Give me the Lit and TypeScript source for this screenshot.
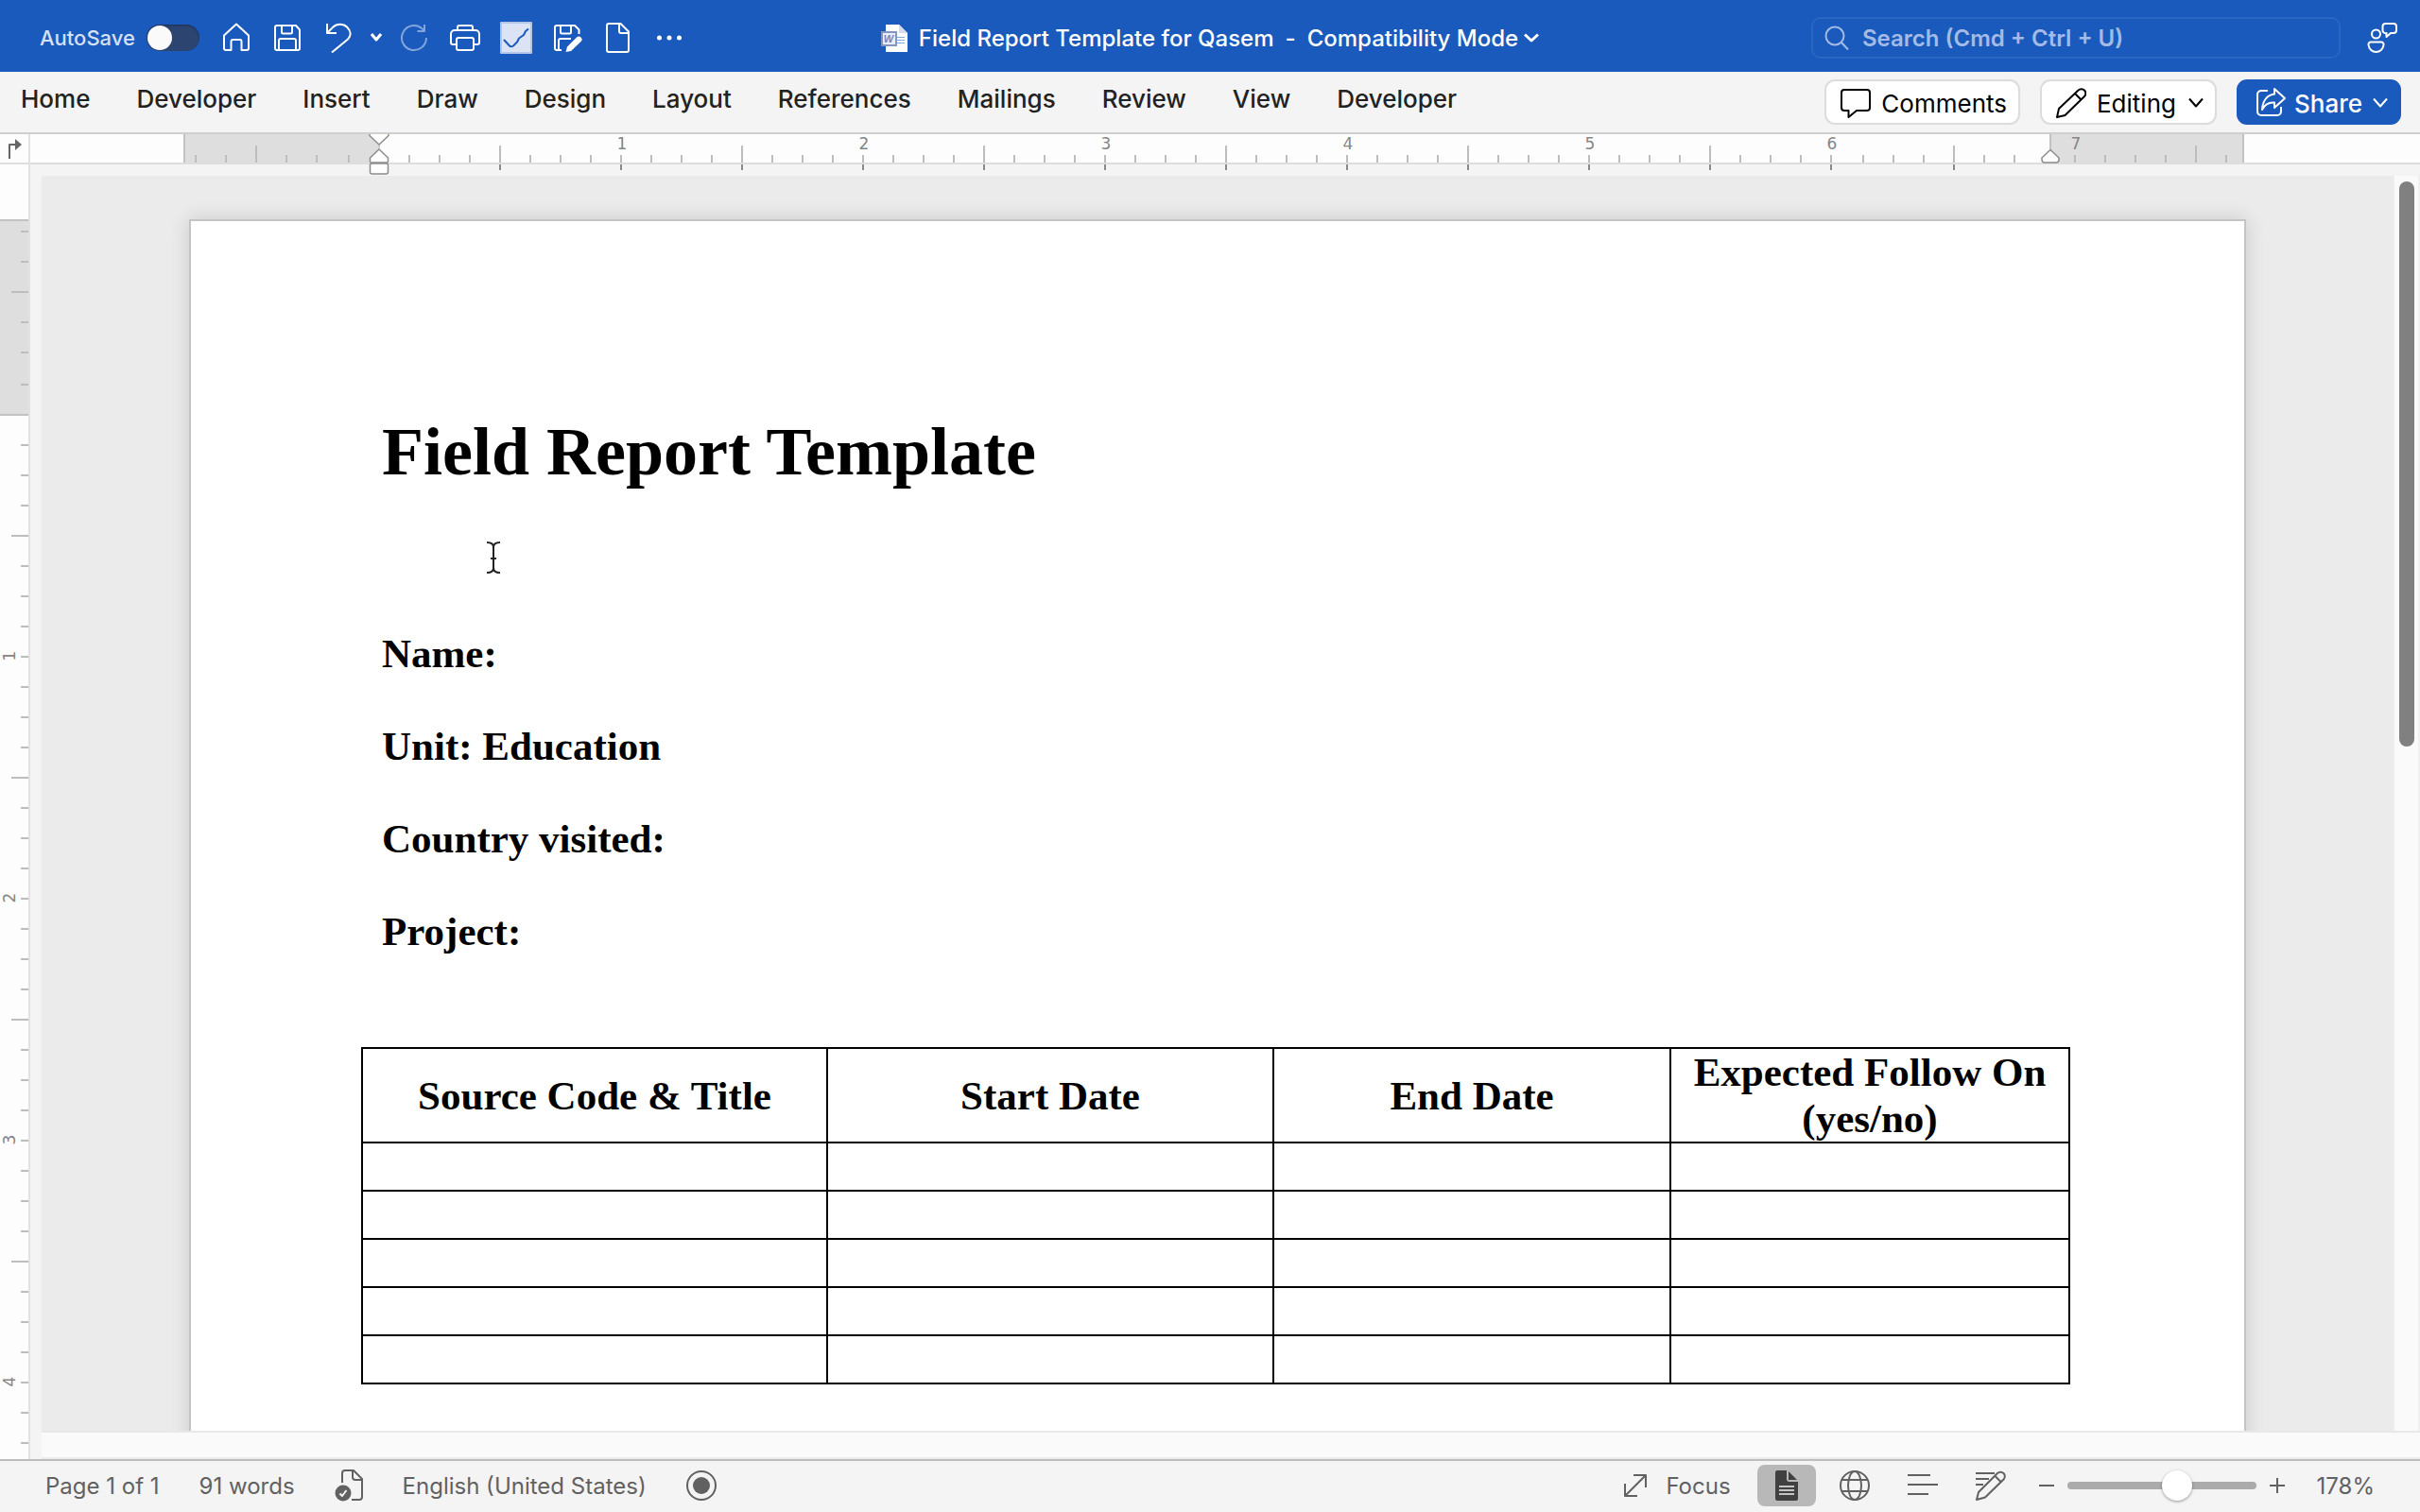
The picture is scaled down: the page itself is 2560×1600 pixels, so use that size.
import { LitElement, html, svg, css } from "lit";
import { customElement } from "lit/decorators.js";

const INCH = 256;
const TABS = ["Home", "Developer", "Insert", "Draw", "Design", "Layout", "References", "Mailings", "Review", "View", "Developer"];
const FIELDS = ["Name:", "Unit: Education", "Country visited:", "Project:"];
const HEADERS = ["Source Code & Title", "Start Date", "End Date", "Expected Follow On (yes/no)"];

const icon = (content: unknown, w = 32, h = 32) =>
  html`<svg class="icon" width=${w} height=${h} viewBox="0 0 ${w} ${h}" aria-hidden="true">${content}</svg>`;

const chevron = () => icon(svg`<path d="M1 1.5 8 9.5 15 1.5"/>`, 16, 12);
const boldChevron = (w = 16) =>
  icon(
    w === 16 ? svg`<path stroke-width="3" d="M1 2.5 8 9 15 2.5"/>` : svg`<path stroke-width="3" d="M1 2 6 8 11 2"/>`,
    w,
    12,
  );

const ICONS = {
  home: svg`<path d="M3 13.5 16 1.5 29 13.5V27a2 2 0 0 1-2 2H21.5V20a2 2 0 0 0-2-2h-7a2 2 0 0 0-2 2v9H5a2 2 0 0 1-2-2Z"/>`,
  save: svg`<path d="M5 3H25l4 4.5V27a2 2 0 0 1-2 2H5a2 2 0 0 1-2-2V5a2 2 0 0 1 2-2ZM10 3v7a1.5 1.5 0 0 0 1.5 1.5h8A1.5 1.5 0 0 0 21 10V3M7 29V19a2 2 0 0 1 2-2H23a2 2 0 0 1 2 2V29"/>`,
  undo: svg`<path d="M4 1v10H14M4.5 10.5 10.5 4.5C14 1 21 .5 25 4.5s5 9 1 13L9 31.5"/>`,
  redo: svg`<path d="M29 16A13 13 0 1 1 24.5 6.2L27 8.5M27 2V9H19.5"/>`,
  print: svg`<path d="M8 8V5a2 2 0 0 1 2-2H22a2 2 0 0 1 2 2V8M7 23H3a2 2 0 0 1-2-2V12a4 4 0 0 1 4-4H27a4 4 0 0 1 4 4v9a2 2 0 0 1-2 2H25M9 16H23a2 2 0 0 1 2 2v9a2 2 0 0 1-2 2H9a2 2 0 0 1-2-2V18a2 2 0 0 1 2-2Z"/>`,
  saveEdit: svg`<path d="M10 29H5a2 2 0 0 1-2-2V5a2 2 0 0 1 2-2H24l4.5 4.5V12M9 3v7a1.5 1.5 0 0 0 1.5 1.5h8A1.5 1.5 0 0 0 20 10V3M7 29V19a2 2 0 0 1 2-2H20"/><path class="fill" d="M14.5 31 16 25.5 26 15.5a3 3 0 0 1 4.5 4.5L20 30Z"/>`,
  blank: svg`<path d="M6 1H18.5L27 9.5V29a2 2 0 0 1-2 2H6a2 2 0 0 1-2-2V3a2 2 0 0 1 2-2ZM17 1V9a2 2 0 0 0 2 2h8"/>`,
  dots: svg`<circle class="fill" cx="5.5" cy="16" r="2.5"/><circle class="fill" cx="16" cy="16" r="2.5"/><circle class="fill" cx="26.5" cy="16" r="2.5"/>`,
  check: svg`<rect x="1" y="1" width="32" height="32" fill="#dbe3f4" stroke="#b3c5e8"/><path stroke="#1a5abd" d="M4 19 10 25.5c1 1 2.5 1 4 0L18 21.5 20 17.5 25 14 27 10 30 7.5"/>`,
  people: svg`<circle cx="9.5" cy="12" r="4.5"/><path d="M4 20.5H15a2.5 2.5 0 0 1 2.5 3C17 28 13.5 31 9.5 31S2 28 1.5 23.5a2.5 2.5 0 0 1 2.5-3ZM19 1H28a3 3 0 0 1 3 3V8a3 3 0 0 1-3 3H25L20.5 15V11a3 3 0 0 1-4-3V4a3 3 0 0 1 2.5-3Z"/>`,
  search: svg`<circle cx="11" cy="11" r="9.5"/><path d="M18 18 25 25.5"/>`,
  comment: svg`<path d="M4 2H28a3 3 0 0 1 3 3V21a3 3 0 0 1-3 3H17L8.5 31V24H4a3 3 0 0 1-3-3V5a3 3 0 0 1 3-3Z"/>`,
  pencil: svg`<path d="M1 31 3 22 23.5 2.5a4.5 4.5 0 0 1 6.5 6.5L9.5 29ZM20 6 26.5 12.5"/>`,
  share: svg`<path d="M13 3H6a4 4 0 0 0-4 4V25a4 4 0 0 0 4 4H23a4 4 0 0 0 4-4V20M20 1 31 11 20 21V15.5C14 15 9.5 18 7 23 7.5 13.5 12.5 7.5 20 6.5Z"/>`,
  proof: svg`<path d="M8 14V4a3 3 0 0 1 3-3h9L29 10V29a3 3 0 0 1-3 3H18M19 1V8a3 3 0 0 0 3 3h7"/><circle class="fill" cx="9" cy="25" r="8.5"/><path stroke="#f4f4f4" d="M5.5 25.5 8 28 12.5 22"/>`,
  record: svg`<circle cx="16" cy="16" r="15"/><circle class="fill" cx="16" cy="16" r="9"/>`,
  focus: svg`<path d="M10 1H23V14M23 1 1 23M1 10V23H14"/>`,
  pageView: svg`<path class="fill" d="M6 0H16V9a3 3 0 0 0 3 3H28V30a2 2 0 0 1-2 2H6a2 2 0 0 1-2-2V2a2 2 0 0 1 2-2Z"/><path class="fill" d="M18 1V10H27Z"/><path stroke="#c4c4c4" d="M8 17H24M8 21H24M8 25H24"/>`,
  globe: svg`<circle cx="16" cy="16" r="15"/><ellipse cx="16" cy="16" rx="7" ry="15"/><path d="M2.5 10H29.5M2.5 22H29.5"/>`,
  outline: svg`<path d="M0 5H24M0 15H32M0 25H22"/>`,
  draft: svg`<path d="M0 3H20M0 9H14M0 15H8M1 31 3 23 23 3a4 4 0 0 1 6.5 6.5L10 28.5ZM20.5 6 26.5 12"/>`,
};

const wordFile = svg`
  <path fill="#fff" d="M5 0H19L28 9V29H5Z"/><path fill="#d5dbe8" d="M19 0V9H28Z"/>
  <path stroke="#7fa8dd" stroke-width="1" d="M17 13.5H25M17 16.5H25M17 19.5H25"/>
  <rect x="1" y="8" width="15" height="14" fill="#e9edf6" stroke="#8296c6" stroke-width="2"/>
  <text x="8" y="19" font-family="Liberation Sans, sans-serif" font-size="11" font-weight="700" font-style="italic" text-anchor="middle" fill="#6f86bf">W</text>`;

/* Eighth-inch marks on either side of a ruler's origin; every fourth one is tall. */
const marks = (from: number, to: number) =>
  Array.from({ length: to - from + 1 }, (_, i) => from + i).filter((n) => n !== 0);
const place = (origin: number, n: number, last: number) =>
  origin + n * (INCH / 8) + (n < -1 ? -2 : 0) + (n > last ? 2 : 0);

@customElement("app-root")
export class AppRoot extends LitElement {
  static styles = css`
    :host { display: block; font-family: Inter, "Liberation Sans", sans-serif; }
    * { box-sizing: border-box; }
    button, input { font: inherit; color: inherit; border: 0; padding: 0; margin: 0; background: none; }
    .app { display: flex; flex-direction: column; height: 100vh; background: #f4f4f4; overflow: hidden; }
    .icon { display: block; flex: none; fill: none; stroke: currentColor; stroke-width: 2; stroke-linejoin: round; }
    .icon .fill { fill: currentColor; stroke: none; }
    .row { display: flex; align-items: center; }
    .center { display: flex; align-items: center; justify-content: center; }

    .titlebar { display: grid; grid-template-columns: 1fr auto 1fr; align-items: center; height: 76px; padding: 4px 24px 0; background: #1a5abd; color: #fff; }
    .autosave { display: flex; align-items: center; gap: 12px; margin: 0 12px 0 18px; font-size: 22px; font-weight: 500; color: #d6e0f3; }
    .switch { appearance: none; width: 56px; height: 28px; border-radius: 14px; background: #2b4570; box-shadow: inset 0 1px 2px #1c3058; }
    .switch::before { content: ""; display: block; width: 26px; height: 26px; margin: 1px; border-radius: 50%; background: #fafafa; }
    .tool { width: 54px; height: 40px; }
    .more { width: 26px; }
    .dim { opacity: .45; }
    .doc-title { gap: 12px; font-size: 24px; font-weight: 500; white-space: nowrap; }
    .mode { gap: 6px; }
    .right { justify-content: flex-end; gap: 28px; }
    .search { display: flex; align-items: center; gap: 14px; width: 560px; height: 44px; padding: 0 12px; border: 2px solid #2b66c2; border-radius: 10px; color: #a3bbe5; }
    .search input { flex: 1; min-width: 0; outline: 0; font-size: 24px; font-weight: 600; }
    .search input::placeholder { color: #a3bbe5; opacity: 1; font-weight: 600; }

    .tabbar { display: flex; align-items: center; justify-content: space-between; height: 66px; padding: 0 20px 0 22px; border-bottom: 2px solid #d1cfcc; color: #222; }
    .tabs { display: flex; gap: 49px; padding-bottom: 8px; font-size: 26px; font-weight: 500; }
    .tabs a { color: inherit; text-decoration: none; }
    .actions { display: flex; gap: 21px; }
    .action { display: flex; align-items: center; height: 48px; gap: 11px; padding: 2px 12px 0 15px; border: 2px solid #dcdcdc; border-radius: 11px; background: #fff; color: #000; font-size: 26px; }
    .action .end { margin-left: 2px; }
    .primary { gap: 9px; padding-left: 18px; border-color: #1a5abd; background: #1a5abd; color: #fff; font-weight: 500; }

    .main { flex: 1; min-height: 0; display: grid; grid-template-columns: 32px minmax(0, 1fr); border-bottom: 2px solid #bdbdbd; }
    .left { display: flex; flex-direction: column; min-height: 0; overflow: hidden; border-right: 2px solid #e2e2e2; background: #fdfdfd; }
    .corner { height: 32px; border-bottom: 2px solid #dedede; color: #666; }
    .vruler { display: block; flex: 1; min-height: 0; width: 30px; }
    .desk { display: flex; flex-direction: column; min-height: 0; }
    .hruler { display: block; width: 100%; height: 44px; flex: none; }
    .num { font-family: "DejaVu Sans", sans-serif; font-size: 17px; fill: #858585; text-anchor: middle; }
    .work { flex: 1; min-height: 0; display: grid; grid-template-columns: minmax(0, 1fr) 28px; grid-template-rows: minmax(0, 1fr) 30px; margin-left: 12px; background: #fafafa; }
    .canvas { overflow: hidden; padding: 46px 156px 0; background: #ebebeb; }
    .vtrack { padding: 6px 5px; border-right: 2px solid #f0f0f0; border-left: 1px solid #f0f0f0; }
    .thumb { width: 16px; height: 598px; border-radius: 8px; background: #808080; }
    .htrack { grid-column: 1 / -1; border-top: 2px solid #e8e8e8; border-bottom: 2px solid #ececec; }

    .page { position: relative; min-height: 2816px; padding: 204px 206px 0 202px; border: 2px solid #c4c4c4; background: #fff; box-shadow: 0 0 20px rgba(0, 0, 0, .14); color: #000; font-family: "Liberation Serif", serif; font-size: 43px; font-weight: 700; line-height: 49px; }
    h1 { margin: 0 0 149px; font-size: 72px; line-height: 80px; }
    .page p { margin: 0 0 49px; }
    table { width: calc(100% + 44px); margin: 98px -22px 0; border-collapse: collapse; table-layout: fixed; }
    .c1 { width: 492px; } .c2 { width: 472px; } .c3 { width: 420px; }
    th, td { padding: 0; border: 2px solid #000; text-align: center; vertical-align: middle; }
    td { height: 51px; }
    .ibeam { position: absolute; left: 312px; top: 339px; }

    .status { display: flex; justify-content: space-between; height: 54px; padding: 0 48px 2px; color: #616161; font-size: 24px; white-space: nowrap; }
    .facts { gap: 42px; }
    .view { width: 62px; height: 44px; border-radius: 8px; }
    .views { display: flex; gap: 10px; margin: 0 20px 0 28px; }
    .on { background: #b8b8b8; color: #404040; }
    .focus { gap: 20px; }
    .zoomer { gap: 14px; }
    .slider { appearance: none; width: 200px; height: 32px; }
    .slider::-webkit-slider-runnable-track { height: 8px; border-radius: 4px; background: #ababab; }
    .slider::-webkit-slider-thumb { appearance: none; width: 32px; height: 32px; margin-top: -12px; border-radius: 50%; background: #fff; box-shadow: 0 1px 3px rgba(0, 0, 0, .4); }
    .percent { margin-left: 34px; }
  `;

  private hRuler() {
    const o = 369;
    return html`<svg class="hruler" role="img" aria-label="Horizontal ruler">
      <rect width="100%" height="30" fill="#fdfdfd"/>
      <rect x="162" width="206" height="30" fill="#dedede"/>
      <rect x="2136" width="206" height="30" fill="#dedede"/>
      <rect y="30" width="100%" height="2" fill="#dedede"/>
      <path stroke="#c2c2c2" stroke-width="2" d="M163 0V30M2137 0V30M2341 0V30"/>
      ${marks(-6, 61).filter((n) => n !== 55).map((n) => {
        const x = place(o, n, 48);
        const half = Math.abs(n) % 8 === 4;
        return svg`<path stroke="#bdbdbd" stroke-width="2" d="M${x} ${half ? 12 : 22}V30"/>
          ${n > 3 && n < 55 && n % 4 === 0 ? svg`<path stroke="#8a8a8a" stroke-width="2" d="M${x} 32V38"/>` : ""}
          ${n > 0 && n % 8 === 0 ? svg`<text class="num" x=${x + 1} y="16">${n / 8}</text>` : ""}`;
      })}
      <g fill="#fff" stroke="#8c8c8c" stroke-width="1.5" stroke-linejoin="round">
        <path d="M369 10V17" stroke="#bbb"/>
        <path d="M359 0V1.5L369 11 379 1.5V0"/>
        <path d="M369 16 378.5 25V29a1 1 0 0 1-1 1H360.5a1 1 0 0 1-1-1V25Z"/>
        <rect x="359.5" y="31" width="19" height="11" rx="2"/>
        <path d="M2137 16.5 2146 25V27a3 3 0 0 1-3 3H2131a3 3 0 0 1-3-3V25Z"/>
      </g>
    </svg>`;
  }

  private vRuler() {
    const o = 265;
    return html`<svg class="vruler" role="img" aria-label="Vertical ruler">
      <rect y="58" width="30" height="208" fill="#dedede"/>
      <path stroke="#c2c2c2" stroke-width="2" d="M0 59H30M0 265H30"/>
      ${marks(-6, 34).map((n) => {
        const y = place(o, n, 99);
        const half = Math.abs(n) % 8 === 4;
        return svg`<path stroke="#bdbdbd" stroke-width="2" d="M${half ? 12 : 22} ${y}H30"/>
          ${n > 0 && n % 8 === 0 ? svg`<text class="num" transform="translate(16 ${y - 1}) rotate(-90)">${n / 8}</text>` : ""}`;
      })}
    </svg>`;
  }

  private tool(label: string, content: unknown, cls = "") {
    return html`<button class="tool center ${cls}" aria-label=${label}>${content}</button>`;
  }

  render() {
    return html`<div class="app">
      <header class="titlebar">
        <div class="row">
          <label class="autosave">AutoSave <input class="switch" type="checkbox" role="switch" /></label>
          ${this.tool("Home", icon(ICONS.home))}
          ${this.tool("Save", icon(ICONS.save))}
          ${this.tool("Undo", icon(ICONS.undo))}
          ${this.tool("Undo history", boldChevron(12), "more")}
          ${this.tool("Redo", icon(ICONS.redo), "dim")}
          ${this.tool("Print", icon(ICONS.print))}
          ${this.tool("Check", icon(ICONS.check, 34, 34))}
          ${this.tool("Save as", icon(ICONS.saveEdit))}
          ${this.tool("New document", icon(ICONS.blank))}
          ${this.tool("More", icon(ICONS.dots))}
        </div>
        <div class="doc-title row">
          <svg width="28" height="29" viewBox="0 0 28 29" aria-hidden="true">${wordFile}</svg>
          <span>Field Report Template for Qasem</span><span>-</span>
          <button class="mode row">Compatibility Mode ${boldChevron()}</button>
        </div>
        <div class="row right">
          <label class="search">${icon(ICONS.search, 26, 26)}<input type="text" aria-label="Search" placeholder="Search (Cmd + Ctrl + U)" /></label>
          <button aria-label="Presence">${icon(ICONS.people)}</button>
        </div>
      </header>

      <div class="tabbar">
        <nav class="tabs">${TABS.map((t) => html`<a href="#">${t}</a>`)}</nav>
        <div class="actions">
          <button class="action">${icon(ICONS.comment)}Comments</button>
          <button class="action">${icon(ICONS.pencil)}Editing<span class="end">${chevron()}</span></button>
          <button class="action primary">${icon(ICONS.share)}Share<span class="end">${chevron()}</span></button>
        </div>
      </div>

      <div class="main">
        <div class="left">
          <button class="corner center" aria-label="Tab stop">${icon(svg`<path d="M6 23V8H14"/><path class="fill" d="M12 2 19 8 12 14Z"/>`, 22, 24)}</button>
          ${this.vRuler()}
        </div>
        <div class="desk">
          ${this.hRuler()}
          <div class="work">
            <main class="canvas">
              <article class="page">
                <h1>Field Report Template</h1>
                ${FIELDS.map((f) => html`<p>${f}</p>`)}
                <table>
                  <colgroup><col class="c1" /><col class="c2" /><col class="c3" /><col /></colgroup>
                  <thead><tr>${HEADERS.map((h) => html`<th>${h}</th>`)}</tr></thead>
                  <tbody>${[1, 2, 3, 4, 5].map(() => html`<tr>${HEADERS.map(() => html`<td></td>`)}</tr>`)}</tbody>
                </table>
                <svg class="ibeam" width="16" height="34" viewBox="0 0 16 34" fill="none" stroke="#222" stroke-width="2" aria-hidden="true">
                  <path d="M1 1C5 1 8 2.5 8 6 8 2.5 11 1 15 1M1 33C5 33 8 31.5 8 28 8 31.5 11 33 15 33M8 5V29M5 18H11"/>
                </svg>
              </article>
            </main>
            <div class="vtrack"><div class="thumb"></div></div>
            <div class="htrack"></div>
          </div>
        </div>
      </div>

      <footer class="status">
        <div class="facts row">
          <span>Page 1 of 1</span><span>91 words</span>
          <button aria-label="Proofing">${icon(ICONS.proof, 30, 34)}</button>
          <span>English (United States)</span>
          <button aria-label="Record macro">${icon(ICONS.record)}</button>
        </div>
        <div class="row">
          <button class="focus row">${icon(ICONS.focus, 24, 24)}Focus</button>
          <div class="views">
            <button class="view on center" aria-label="Print layout">${icon(ICONS.pageView)}</button>
            <button class="view center" aria-label="Web layout">${icon(ICONS.globe)}</button>
            <button class="view center" aria-label="Outline">${icon(ICONS.outline)}</button>
            <button class="view center" aria-label="Draft">${icon(ICONS.draft)}</button>
          </div>
          <div class="zoomer row">
            <button aria-label="Zoom out">${icon(svg`<path d="M0 8H16"/>`, 16, 16)}</button>
            <input class="slider" type="range" min="0" max="100" value="60" aria-label="Zoom" />
            <button aria-label="Zoom in">${icon(svg`<path d="M0 8H16M8 0V16"/>`, 16, 16)}</button>
          </div>
          <span class="percent">178%</span>
        </div>
      </footer>
    </div>`;
  }
}
